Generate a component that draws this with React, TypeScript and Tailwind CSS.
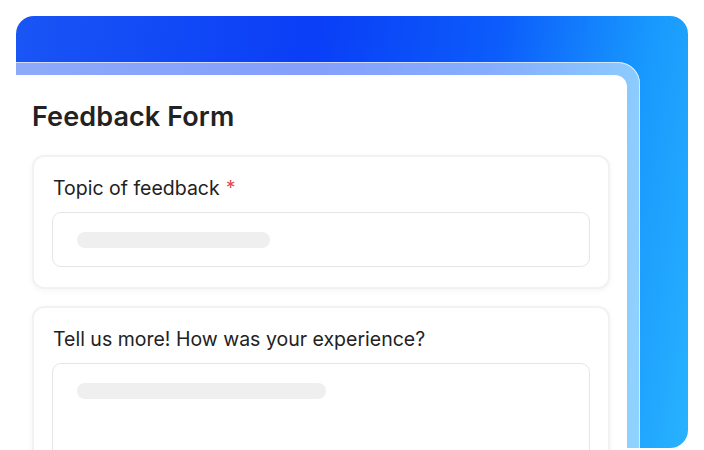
import React from 'react';

const Field: React.FC<{ label: string; required?: boolean; barWidth: string; tall?: boolean }> = ({
  label,
  required,
  barWidth,
  tall,
}) => (
  <div className="w-[578px] rounded-xl border-2 border-[#f2f2f2] bg-white px-[18px] pt-[17px] pb-[20px] shadow-[0_2px_6px_rgba(0,0,0,0.04)]">
    <div className="text-[19.5px] leading-7 text-[#222] pl-px">
      {label}
      {required && <span className="ml-1.5 text-[#e5484d]">*</span>}
    </div>
    <div
      className={`mt-[10px] rounded-[9px] border-[1.5px] border-[#e6e6e6] bg-white pl-6 pt-[19px] ${
        tall ? 'h-[120px]' : 'h-[55px]'
      }`}
    >
      <div className={`h-4 rounded-full bg-[#efefef] ${barWidth}`} />
    </div>
  </div>
);

const App: React.FC = () => {
  return (
    <div className="w-[704px] h-[450px] overflow-hidden bg-white font-['Inter','Liberation_Sans',sans-serif]">
      <div className="ml-4 mt-4 w-[672px] h-[432px] rounded-[18px] bg-[linear-gradient(100deg,#1a55f5_0%,#0a3ef7_40%,#0c5cfb_65%,#1898fd_85%,#28b2ff_100%)] pt-[46px]">
        <div className="w-[624px] h-[420px] rounded-tr-[22px] bg-white/50 pt-[13px] pr-[13px] shadow-[inset_0_1px_0_rgba(255,255,255,0.6),inset_-1px_0_0_rgba(255,255,255,0.6)]">
          <div className="h-full rounded-tr-[12px] bg-white px-4 pt-[26px]">
            <h1 className="text-[27px] leading-8 font-semibold tracking-[0.1px] text-[#222]">Feedback Form</h1>
            <div className="mt-[22px] flex flex-col gap-[17px]">
              <Field label="Topic of feedback" required barWidth="w-[193px]" />
              <Field label="Tell us more! How was your experience?" barWidth="w-[249px]" tall />
            </div>
          </div>
        </div>
      </div>
    </div>
  );
};

export default App;
